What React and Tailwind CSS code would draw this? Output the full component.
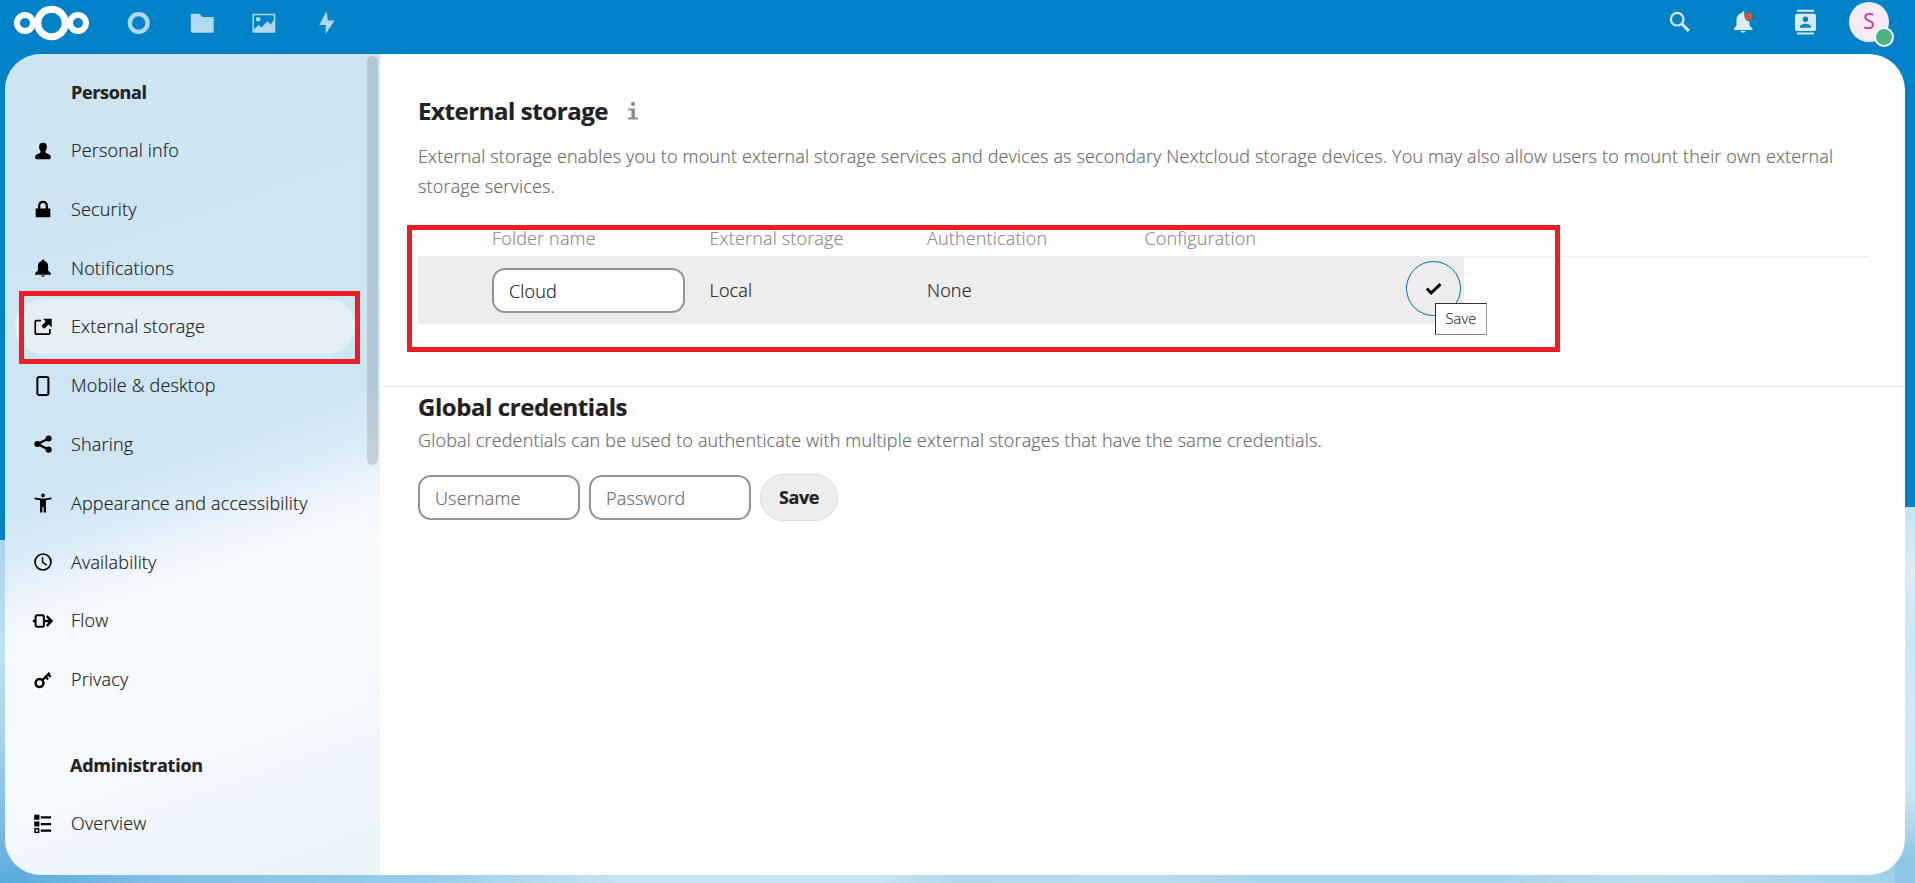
import React from 'react';

const stroke = { fill: 'none', stroke: 'currentColor' };

const NAV_ICONS = {
  user: (
    <path d="M8 .6C5.7.6 4.5 2 4.5 4.3c0 1.500.5 2.700 1.100 3.500.4.6.4 1.200 0 1.700C4.500 10.500 1 10.600 1 13.600c0 1.300.6 1.800 2 1.800h10c1.400 0 2-.5 2-1.800 0-3-3.500-3.100-4.600-4.100-.4-.5-.4-1.100 0-1.700.6-.8 1.100-2 1.100-3.500C11.500 2 10.300.6 8 .6z" />
  ),
  lock: (
    <path d="M8 .7C5.300.7 3.600 2.500 3.600 5v2.600H1.500v7.700h13V7.600h-2.100V5C12.400 2.500 10.700.7 8 .7zm0 2c1.500 0 2.400.9 2.400 2.400v2.500H5.600V5.100C5.600 3.600 6.500 2.700 8 2.700z" />
  ),
  bell: (
    <path d="M8 .5c-.7 0-1.200.5-1.300 1.200C4.600 2.200 3.500 3.900 3.500 6v4.200L1 12.600V14h14v-1.400l-2.500-2.400V6c0-2.100-1.100-3.800-3.200-4.300C9.200 1 8.700.5 8 .5zM6.300 14.600c.2.700.9 1.100 1.700 1.100s1.500-.4 1.700-1.100z" />
  ),
  external: (
    <>
      <path d="M6.200 2.300H2.100c-.6 0-1 .4-1 1v10c0 .6.4 1 1 1h11c.6 0 1-.4 1-1V9.800" {...stroke} strokeWidth="1.500" />
      <path d="M8 .7h7.700v7.700L13 5.800l-3.900 3.700L6.600 7l3.800-3.800z" />
    </>
  ),
  phone: <rect x="3" y="0" width="9.800" height="16" rx="1.500" {...stroke} strokeWidth="1.800" />,
  share: (
    <>
      <path d="M13 3.100 3.200 8 13 13" {...stroke} strokeWidth="2" />
      <circle cx="13" cy="3.100" r="2.700" />
      <circle cx="3" cy="8" r="2.700" />
      <circle cx="13" cy="13" r="2.700" />
    </>
  ),
  person: (
    <>
      <circle cx="8" cy="1.200" r="1.700" />
      <path d="M.6 3.100 6 4h4l5.400-.9.200 1.500-5 1V16.500H8.600v-5H7.400v5h-2V5.600l-5-1z" />
    </>
  ),
  clock: (
    <>
      <circle cx="8" cy="8" r="7.100" {...stroke} strokeWidth="1.500" />
      <path d="M7.600 3.700v4.700l3.800 2.300" {...stroke} strokeWidth="1.300" />
    </>
  ),
  flow: (
    <>
      <rect x="1.400" y="2.900" width="7.400" height="10.200" rx="1.500" {...stroke} strokeWidth="1.800" />
      <path d="M-1 8h2M9 8h6M11.400 3.700 15.600 8l-4.200 4.300" {...stroke} strokeWidth="2.100" />
    </>
  ),
  key: (
    <>
      <circle cx="4.900" cy="10.700" r="3.500" {...stroke} strokeWidth="2.200" />
      <path d="m7.300 8.200 6.600-6.500M10.300 5.400l2.300 2.100M12.500 3.200l2.400 2.100" {...stroke} strokeWidth="2" />
    </>
  ),
  overview: (
    <>
      <path d="M.2-.3h4.600v4.600H.2zM.2 5.700h4.600v4.600H.2zM6 1.200h9.200v2H6zM6 7h9.200v2H6zM6 12.800h9.200v2H6z" />
      <rect x=".9" y="12.200" width="3.200" height="3.200" {...stroke} strokeWidth="1.300" />
    </>
  ),
};

const PERSONAL = [
  ['Personal info', 'user'],
  ['Security', 'lock'],
  ['Notifications', 'bell'],
  ['External storage', 'external'],
  ['Mobile & desktop', 'phone'],
  ['Sharing', 'share'],
  ['Appearance and accessibility', 'person'],
  ['Availability', 'clock'],
  ['Flow', 'flow'],
  ['Privacy', 'key'],
];

function NavItem({ label, icon }) {
  const active = icon === 'external';
  return (
    <li className="relative h-[58.8px] pl-[10px]">
      <a
        className={`flex h-[55px] w-[340px] items-center rounded-full pl-[19px] ${active ? 'bg-[#e5f0f4]' : ''}`}
      >
        <svg viewBox="0 0 16 16" className="size-[18px] shrink-0 overflow-visible text-black" fill="currentColor">
          {NAV_ICONS[icon]}
        </svg>
        <span className="ml-[19px] whitespace-nowrap">{label}</span>
      </a>
      {active && <div className="absolute -top-[8px] left-[14px] h-[73px] w-[341px] border-[5px] border-[#ee1c25]" />}
    </li>
  );
}

function Header() {
  return (
    <header className="flex h-[54px] shrink-0 items-start justify-between">
      <div className="flex h-[45px] items-center pl-[14px] text-white">
        <svg width="76" height="36" viewBox="0 0 76 36" fill="none" stroke="currentColor">
          <circle cx="37.500" cy="18" r="13.800" strokeWidth="7" />
          <circle cx="11" cy="18" r="8" strokeWidth="6" />
          <circle cx="64" cy="18" r="8" strokeWidth="6" />
        </svg>
        <div className="ml-[37px] flex items-center gap-[38.500px] opacity-70">
          <svg width="24" height="24" viewBox="0 0 24 24" fill="none" stroke="currentColor">
            <circle cx="11.700" cy="12" r="8.900" strokeWidth="4.300" />
          </svg>
          <svg width="24" height="24" viewBox="0 0 24 24" fill="currentColor">
            <path d="M2 2.700h7.300L12.500 6h10c.8 0 1.200.4 1.200 1.200v13.300c0 .8-.4 1.200-1.200 1.200H2c-.8 0-1.200-.4-1.200-1.200V3.900c0-.8.400-1.200 1.200-1.200z" />
          </svg>
          <svg width="24" height="24" viewBox="0 0 24 24" fill="currentColor">
            <path
              fillRule="evenodd"
              d="M1.500 2.700h20.800c.6 0 1 .4 1 1v17c0 .6-.4 1-1 1H1.500c-.6 0-1-.4-1-1v-17c0-.6.4-1 1-1zM2 4.200v14.300l4.500-4.600 3 2.600 6-6.200 3 3.200 3.300-4V4.200z"
            />
            <circle cx="6.200" cy="8.300" r="2.300" />
          </svg>
          <svg width="24" height="24" viewBox="0 0 24 24" fill="currentColor">
            <path d="M11.600.3 4.300 14h6.500l-.3 9.300L19.600 9.500h-6.800z" />
          </svg>
        </div>
      </div>
      <div className="flex h-[44px] items-center pr-[26px] text-white">
        <svg width="24" height="24" viewBox="0 0 24 24" className="opacity-85" fill="none" stroke="currentColor">
          <circle cx="9.200" cy="9.200" r="6.300" strokeWidth="2.200" />
          <path d="m13.600 13.600 7.200 7.300" strokeWidth="3" />
        </svg>
        <svg width="24" height="24" viewBox="0 0 24 24" className="ml-[39px] overflow-visible">
          <g fill="#fff" opacity=".85">
            <path d="M13.500 1.500c-.9-.4-2.100.1-2.300 1.300C7.300 3.600 5.500 6.600 5.500 10v5.500L2.800 18.500v1.400h18.700v-1.400l-3-3v-4.200c-3.600.3-6.300-4.700-5-9.800zM9.500 21c.4 1.100 1.300 1.700 2.600 1.700s2.200-.6 2.600-1.700z" />
          </g>
          <circle cx="17.700" cy="6.400" r="3.900" fill="#dc5126" />
        </svg>
        <svg width="26" height="28" viewBox="0 0 26 28" className="ml-[38px] opacity-85" fill="currentColor">
          <path d="M4 1.700h17v2H4zM4 24.500h17v2H4z" />
          <path
            fillRule="evenodd"
            d="M4 5.700h17a2 2 0 0 1 2 2v13.300a2 2 0 0 1-2 2H4a2 2 0 0 1-2-2V7.700a2 2 0 0 1 2-2zM12.500 8.500a2.700 2.700 0 1 0 0 5.400 2.700 2.700 0 0 0 0-5.400zM7 19.700h11v-1c0-1.900-3.200-3-5.500-3s-5.500 1.100-5.500 3z"
          />
        </svg>
        <div className="relative ml-[30px] flex size-[40px] items-center justify-center rounded-full bg-[#f6eaf5] text-[21px] font-normal text-[#b640a0]">
          S
          <span className="absolute top-[25px] left-[25px] size-[20px] rounded-full border-2 border-white bg-[#49b382]" />
        </div>
      </div>
    </header>
  );
}

function Sidebar() {
  return (
    <nav className="relative w-[375px] shrink-0 overflow-hidden bg-[linear-gradient(161deg,#cde5f3_0%,#cee6f4_48%,#dbecf7_54%,#eff6fc_59%,#f7fbfe_64%,#f5fafd_78%,#edf5fc_90%,#e8f4fa_100%)] text-[#222]">
      <h3 className="mt-[24px] ml-[66px] text-[18px] leading-[28px] font-bold tracking-[-0.350px]">Personal</h3>
      <ul className="mt-[17px]">
        {PERSONAL.map(([label, icon]) => (
          <NavItem key={label} label={label} icon={icon} />
        ))}
      </ul>
      <h3 className="mt-[40px] ml-[65px] text-[18px] leading-[28px] font-bold tracking-[-0.250px]">Administration</h3>
      <ul className="mt-[17.500px]">
        <NavItem label="Overview" icon="overview" />
      </ul>
      <div className="absolute top-[2px] right-[2px] h-[409px] w-[11px] rounded-full bg-[#000]/13" />
    </nav>
  );
}

function StorageTable() {
  return (
    <div className="relative mt-[40px] w-[1450px]">
      <div className="grid h-[26px] grid-cols-[217.500px_217.500px_217.500px_1fr] border-b border-[#ededed] pl-[74px] leading-[14px] text-[#8c8c8c]">
        <span>Folder name</span>
        <span>External storage</span>
        <span>Authentication</span>
        <span>Configuration</span>
      </div>
      <div className="relative -mt-px grid h-[68px] w-[1046px] grid-cols-[217.500px_217.500px_1fr_auto] items-center bg-[#ededed] pl-[74px] text-[#222]">
        <div className="mt-px flex h-[45px] w-[193px] items-center rounded-[13px] border-2 border-[#949494] bg-white pt-px pl-[15px]">
          Cloud
        </div>
        <span>Local</span>
        <span>None</span>
        <button className="mr-[3px] mb-[3px] flex size-[55px] items-center justify-center rounded-full border border-[#006aa3]">
          <svg width="18" height="18" viewBox="0 0 18 18" fill="none" stroke="#000" strokeWidth="3" className="mt-px ml-px">
            <path d="m1.800 8.500 4.300 4.500L15.500 4.200" />
          </svg>
        </button>
        <div className="absolute top-[47px] left-[1017px] flex h-[32px] w-[52px] items-center justify-center border border-t-[#333] border-r-[#999] border-b-[#888] border-l-[#333] bg-white text-[14.500px] text-[#333]">
          Save
        </div>
      </div>
      <div className="absolute -top-[6px] -left-[11px] h-[127px] w-[1153px] border-[5px] border-[#ee1c25]" />
    </div>
  );
}

function Field({ label }) {
  return (
    <div className="flex h-[45px] w-[162px] items-center rounded-[13px] border-2 border-[#949494] bg-white pt-px pl-[15px] text-[#6b6b6b]">
      {label}
    </div>
  );
}

export default function App() {
  return (
    <div className="flex h-[883px] w-[1915px] flex-col bg-[linear-gradient(90deg,#58abdc_0%,#80c0e4_8%,#97cdea_22%,#c6e2f3_32%,#c8e3f3_46%,#b0d8ee_50%,#b9dcf0_60%,#a8d4ec_66%,#a8d4ec_78%,#bcdef0_86%,#a0d0ea_100%)] font-['Open_Sans',sans-serif] text-[18px] font-light tracking-[0.165px] [-webkit-text-stroke:0.2px]">
      <div className="flex h-full flex-col bg-[linear-gradient(#0082c9,#0082c9),linear-gradient(#0082c9,#0082c9),linear-gradient(180deg,#a5d3ee_538px,#c0e0f3_640px,#a5d3ec_740px,#62afdf_870px,transparent_883px),linear-gradient(180deg,#c5e4f0_507px,#dcebf8_570px,#cae5f2_640px,#d2e8f6_710px,#c8e5f2_800px,#8cc5e5_860px,#8cc5e5_883px)] bg-[length:100%_507px,20px_540px,20px_875px,20px_883px] bg-[position:0_0,0_0,0_0,100%_0] bg-no-repeat">
        <Header />
        <div className="mr-[10px] mb-[8px] ml-[5px] flex min-h-0 flex-1 overflow-hidden rounded-[36px] bg-white">
          <Sidebar />
          <main className="flex-1">
            <section className="h-[333px] border-b border-[#ededed] pl-[38px]">
              <div className="flex h-[113px] items-center gap-[20px]">
                <h2 className="text-[24px] font-bold tracking-[-0.430px] text-[#222]">External storage</h2>
                <svg width="10" height="18" viewBox="0 0 10 18" fill="#878787">
                  <circle cx="5" cy="2" r="2.100" />
                  <path d="M.3 6.400h6.500v9.200h3.100v2H0v-2h3.500V8.400H.3z" />
                </svg>
              </div>
              <p className="-mt-[26px] w-[1451px] leading-[30px] text-[#6b6b6b]">
                External storage enables you to mount external storage services and devices as secondary Nextcloud
                storage devices. You may also allow users to mount their own external storage services.
              </p>
              <div className="-mt-[10px]">
                <StorageTable />
              </div>
            </section>
            <section className="pl-[38px]">
              <h2 className="pt-[3px] text-[24px] leading-[34px] font-bold tracking-[-0.430px] text-[#222]">
                Global credentials
              </h2>
              <p className="leading-[32px] text-[#6b6b6b]">
                Global credentials can be used to authenticate with multiple external storages that have the same
                credentials.
              </p>
              <div className="mt-[18px] flex items-center gap-[9px]">
                <Field label="Username" />
                <Field label="Password" />
                <button className="h-[47px] w-[78px] rounded-full border border-[#dbdbdb] bg-[#ededed] text-[18px] font-bold tracking-[-0.4px] text-[#222]">
                  Save
                </button>
              </div>
            </section>
          </main>
        </div>
      </div>
    </div>
  );
}
